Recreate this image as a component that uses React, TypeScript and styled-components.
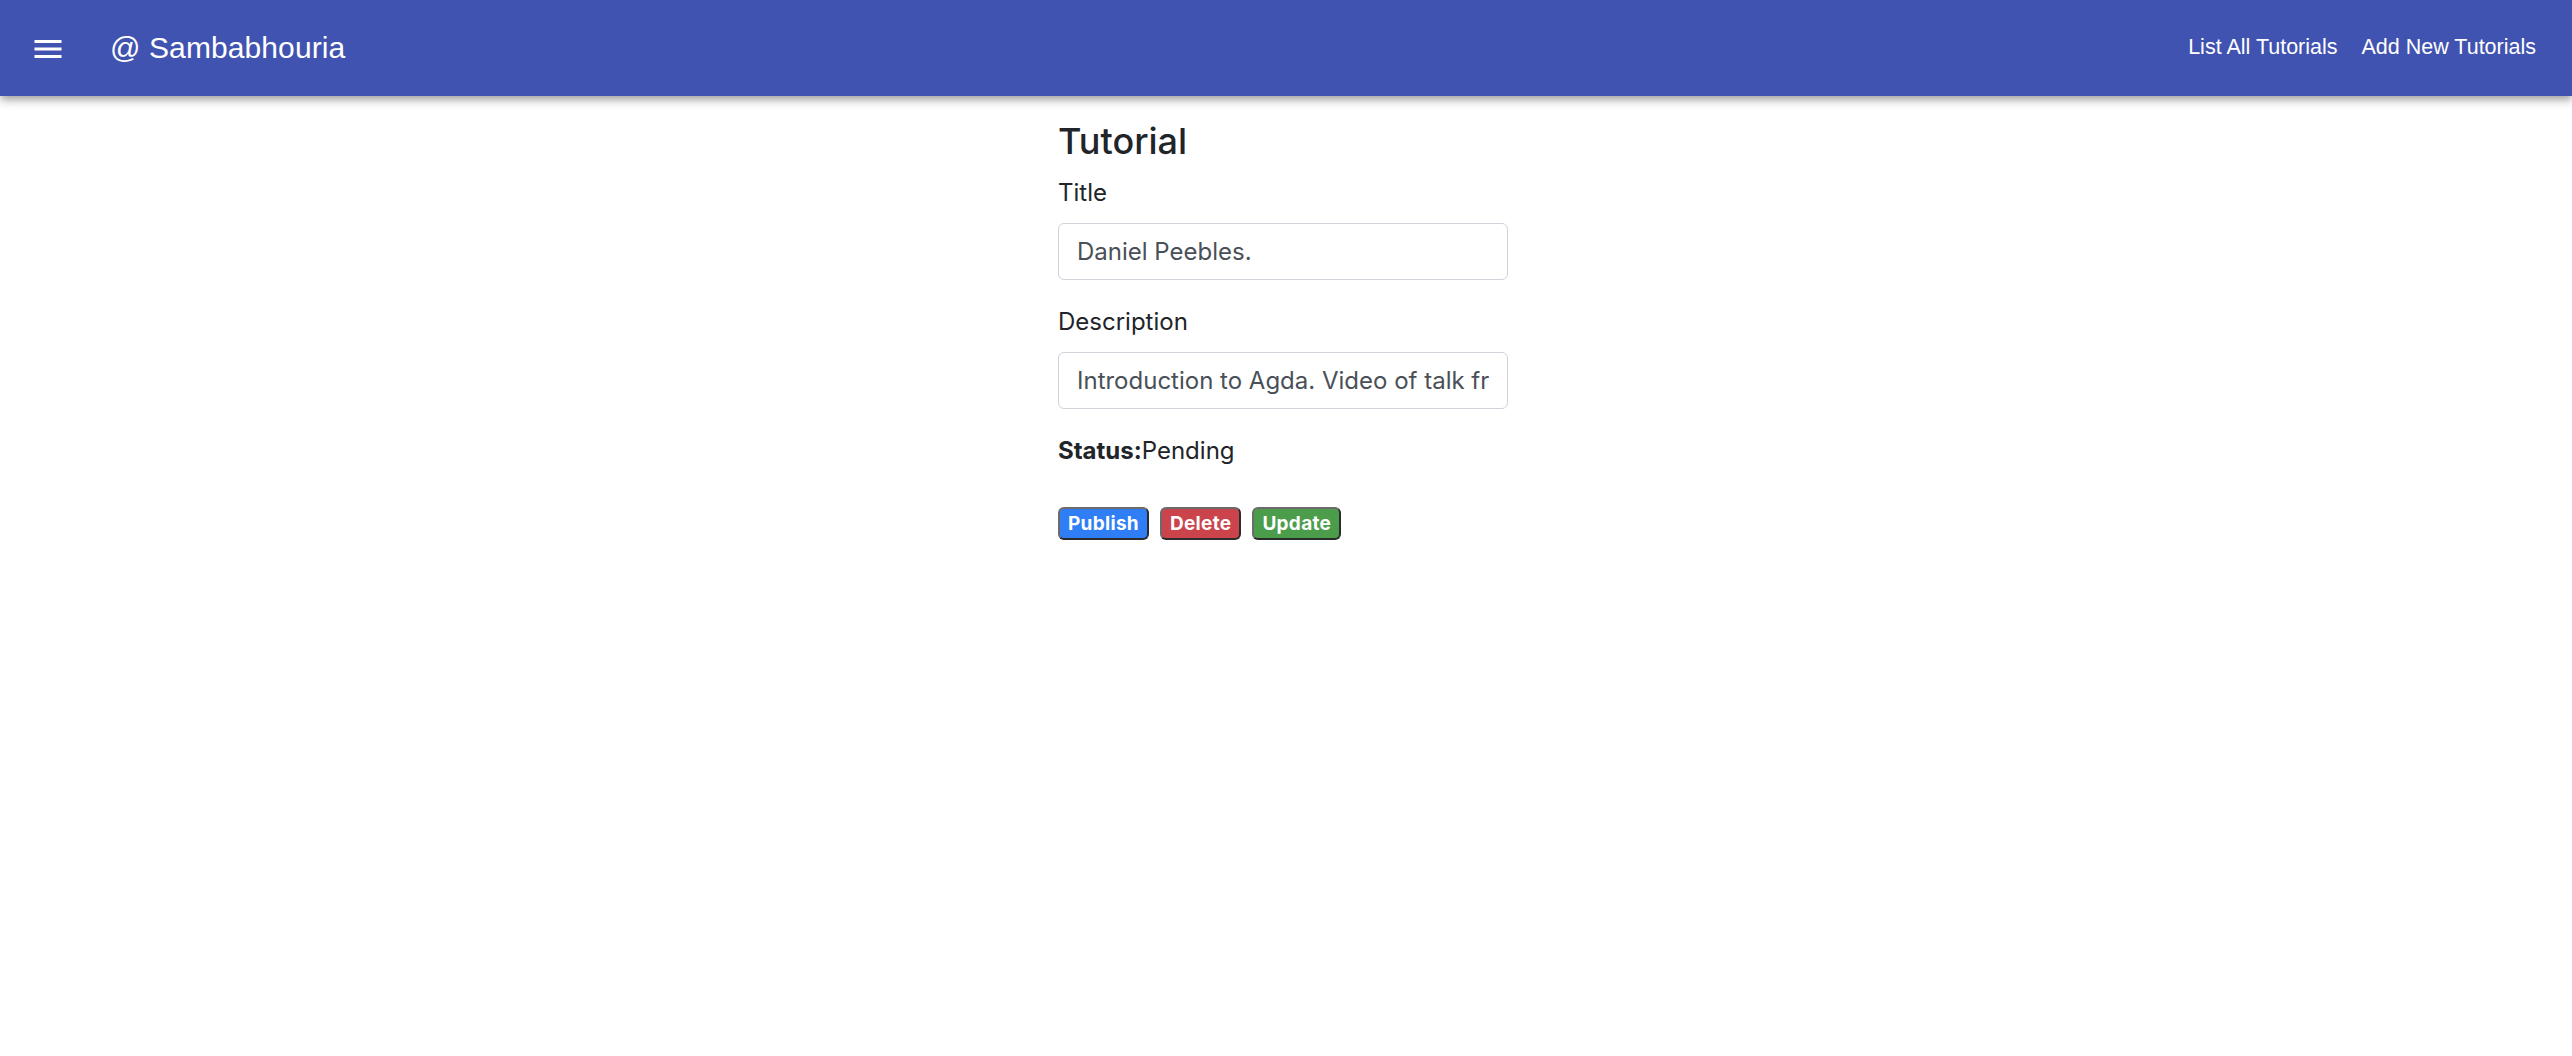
import React from "react";
import styled, { createGlobalStyle } from "styled-components";

const GlobalStyle = createGlobalStyle`
  html, body {
    margin: 0;
    padding: 0;
    background: #ffffff;
  }
  body {
    font-family: Inter, "Noto Sans", "Liberation Sans", sans-serif;
    color: #212529;
  }
  * { box-sizing: border-box; }
`;

const AppBar = styled.header`
  position: relative;
  z-index: 2;
  height: 96px;
  background: #4153b0;
  color: #ffffff;
  display: flex;
  align-items: center;
  padding: 0 36px 0 30px;
  box-shadow: 0px 3px 6px -1.5px rgba(0, 0, 0, 0.2),
    0px 6px 7.5px 0px rgba(0, 0, 0, 0.14),
    0px 1.5px 15px 0px rgba(0, 0, 0, 0.12);
  font-family: "Liberation Sans", Arial, Helvetica, sans-serif;
`;

const MenuButton = styled.button`
  width: 36px;
  height: 36px;
  padding: 0;
  border: none;
  background: transparent;
  color: #ffffff;
  display: flex;
  align-items: center;
  justify-content: center;
  cursor: pointer;
  margin-top: 1px;
`;

const Brand = styled.div`
  font-size: 30px;
  font-weight: 400;
  line-height: 1;
  margin-left: 44px;
  letter-spacing: 0.1px;
`;

const Spacer = styled.div`
  flex: 1;
`;

const Nav = styled.nav`
  display: flex;
  align-items: center;
  gap: 24px;
`;

const NavLink = styled.a`
  color: #ffffff;
  text-decoration: none;
  font-size: 21.5px;
  line-height: 1;
  cursor: pointer;
`;

const Main = styled.main`
  width: 456px;
  margin: 24px auto 0;
`;

const Heading = styled.h4`
  margin: 0 0 12px;
  font-size: 36px;
  font-weight: 500;
  line-height: 1.2;
  color: #212529;
`;

const FormGroup = styled.div`
  margin-bottom: 24px;
`;

const Label = styled.label`
  display: block;
  font-size: 24px;
  line-height: 36px;
  margin-bottom: 12px;
  color: #212529;
`;

const Input = styled.input`
  display: block;
  width: 450px;
  height: 57px;
  padding: 9px 18px;
  font-family: inherit;
  font-size: 24px;
  line-height: 36px;
  color: #495057;
  background: #ffffff;
  border: 1.5px solid #ced4da;
  border-radius: 6px;
  outline: none;
`;

const StatusLine = styled.div`
  font-size: 24px;
  line-height: 36px;
  margin-bottom: 24px;
  color: #212529;
`;

const Strong = styled.strong`
  font-weight: 700;
`;

const ButtonRow = styled.div`
  display: flex;
  gap: 11px;
  padding-top: 14px;
`;

const Badge = styled.button<{ $bg: string }>`
  font-family: inherit;
  font-size: 19px;
  font-weight: 700;
  line-height: 1;
  padding: 5px 8px 5px;
  height: 33px;
  color: #ffffff;
  background: ${(p) => p.$bg};
  border: 2px solid #2b2b2b;
  border-top-color: #6b6b6b;
  border-left-color: #6b6b6b;
  border-radius: 6px;
  cursor: pointer;
  letter-spacing: 0.3px;
`;

const MenuIcon = () => (
  <svg width="36" height="36" viewBox="0 0 24 24" fill="currentColor" aria-hidden="true">
    <path d="M3 18h18v-2H3v2zm0-5h18v-2H3v2zm0-7v2h18V6H3z" />
  </svg>
);

export default function App() {
  return (
    <>
      <GlobalStyle />
      <AppBar>
        <MenuButton aria-label="menu">
          <MenuIcon />
        </MenuButton>
        <Brand>@ Sambabhouria</Brand>
        <Spacer />
        <Nav>
          <NavLink>List All Tutorials</NavLink>
          <NavLink>Add New Tutorials</NavLink>
        </Nav>
      </AppBar>
      <Main>
        <Heading>Tutorial</Heading>
        <form>
          <FormGroup>
            <Label htmlFor="title">Title</Label>
            <Input id="title" defaultValue="Daniel Peebles." />
          </FormGroup>
          <FormGroup>
            <Label htmlFor="description">Description</Label>
            <Input
              id="description"
              defaultValue="Introduction to Agda. Video of talk from the FP-Syd functional programming group."
            />
          </FormGroup>
          <StatusLine>
            <Strong>Status:</Strong>Pending
          </StatusLine>
        </form>
        <ButtonRow>
          <Badge type="button" $bg="#2f7ef5">Publish</Badge>
          <Badge type="button" $bg="#cb444c">Delete</Badge>
          <Badge type="button" $bg="#4b9d4b">Update</Badge>
        </ButtonRow>
      </Main>
    </>
  );
}
